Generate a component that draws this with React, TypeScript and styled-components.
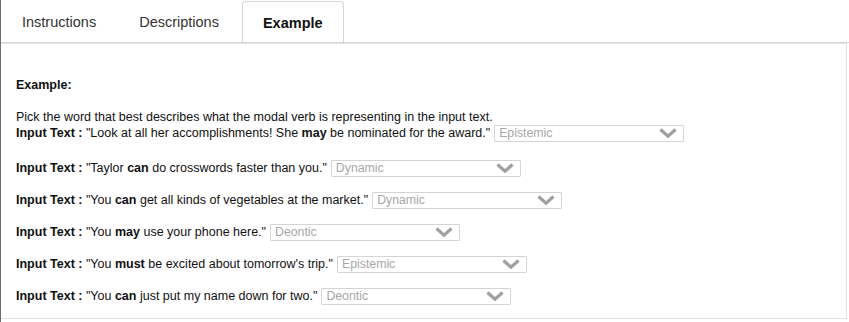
import styled, { createGlobalStyle } from "styled-components";

const GlobalStyle = createGlobalStyle`
  html, body {
    margin: 0;
    padding: 0;
    background: #fff;
  }
  body {
    font-family: "Liberation Sans", Arial, Helvetica, sans-serif;
    color: #111;
  }
`;

const Page = styled.div`
  box-sizing: border-box;
  width: 849px;
  height: 322px;
  border-left: 1px solid #6f6f6f;
  overflow: hidden;
`;

const TabBar = styled.div`
  display: flex;
  align-items: flex-end;
  height: 43px;
  box-sizing: border-box;
  border-bottom: 1px solid #d6d6d6;
`;

const Tab = styled.div<{ $active?: boolean }>`
  box-sizing: border-box;
  display: flex;
  align-items: center;
  height: ${(p) => (p.$active ? "41px" : "42px")};
  padding: 1px ${(p) => (p.$active ? "20px" : "21px")} 0;
  margin: 0 1px 0 ${(p) => (p.$active ? "1px" : "0")};
  font-size: 14.5px;
  font-weight: ${(p) => (p.$active ? 700 : 400)};
  color: ${(p) => (p.$active ? "#111" : "#333")};
  border: ${(p) => (p.$active ? "1px solid #d6d6d6" : "none")};
  border-bottom: none;
  border-radius: 4px 4px 0 0;
  background: #fff;
`;

const Panel = styled.div`
  box-sizing: border-box;
  width: 846px;
  height: 276px;
  border: 1px solid #e2e2e2;
  border-left: none;
  padding: 34px 15px 0 15px;
  font-size: 12.5px;
`;

const Title = styled.div`
  font-weight: 700;
  line-height: 14px;
`;

const Intro = styled.div`
  margin-top: 17px;
  line-height: 16px;
`;

const Rows = styled.div`
  display: flex;
  flex-direction: column;
  gap: 16px;
  margin-top: 19px;
`;

const Row = styled.div`
  display: flex;
  align-items: center;
  height: 16px;
  line-height: 16px;
  white-space: pre;
`;

const Label = styled.b`
  font-weight: 700;
`;

const SelectBox = styled.div`
  box-sizing: border-box;
  display: flex;
  align-items: center;
  justify-content: space-between;
  width: 190px;
  height: 17px;
  margin-left: 4px;
  padding: 0 6px 0 4px;
  border: 1px solid #d4d4d4;
  border-radius: 1px;
  color: #a8a8a8;
  font-size: 12.3px;
  background: #fff;
`;

const Chevron = () => (
  <svg width="18" height="10" viewBox="0 0 18 10">
    <path
      d="M1.5 1.5 L9 8.2 L16.5 1.5"
      fill="none"
      stroke="#a0a0a0"
      strokeWidth="3.2"
      strokeLinejoin="miter"
    />
  </svg>
);

function Select({ value }: { value: string }) {
  return (
    <SelectBox>
      <span>{value}</span>
      <Chevron />
    </SelectBox>
  );
}

interface Item {
  before: string;
  verb: string;
  after: string;
  answer: string;
}

const items: Item[] = [
  { before: "Look at all her accomplishments! She ", verb: "may", after: " be nominated for the award.", answer: "Epistemic" },
  { before: "Taylor ", verb: "can", after: " do crosswords faster than you.", answer: "Dynamic" },
  { before: "You ", verb: "can", after: " get all kinds of vegetables at the market.", answer: "Dynamic" },
  { before: "You ", verb: "may", after: " use your phone here.", answer: "Deontic" },
  { before: "You ", verb: "must", after: " be excited about tomorrow's trip.", answer: "Epistemic" },
  { before: "You ", verb: "can", after: " just put my name down for two.", answer: "Deontic" },
];

function ExampleRow({ item }: { item: Item }) {
  return (
    <Row>
      <Label>Input Text :</Label>
      {' "' + item.before}
      <Label>{item.verb}</Label>
      {item.after + '"'}
      <Select value={item.answer} />
    </Row>
  );
}

export default function App() {
  const [first, ...rest] = items;
  return (
    <Page>
      <GlobalStyle />
      <TabBar>
        <Tab>Instructions</Tab>
        <Tab>Descriptions</Tab>
        <Tab $active>Example</Tab>
      </TabBar>
      <Panel>
        <Title>Example:</Title>
        <Intro>
          Pick the word that best describes what the modal verb is representing in the input text.
          <ExampleRow item={first} />
        </Intro>
        <Rows>
          {rest.map((it, i) => (
            <ExampleRow key={i} item={it} />
          ))}
        </Rows>
      </Panel>
    </Page>
  );
}
